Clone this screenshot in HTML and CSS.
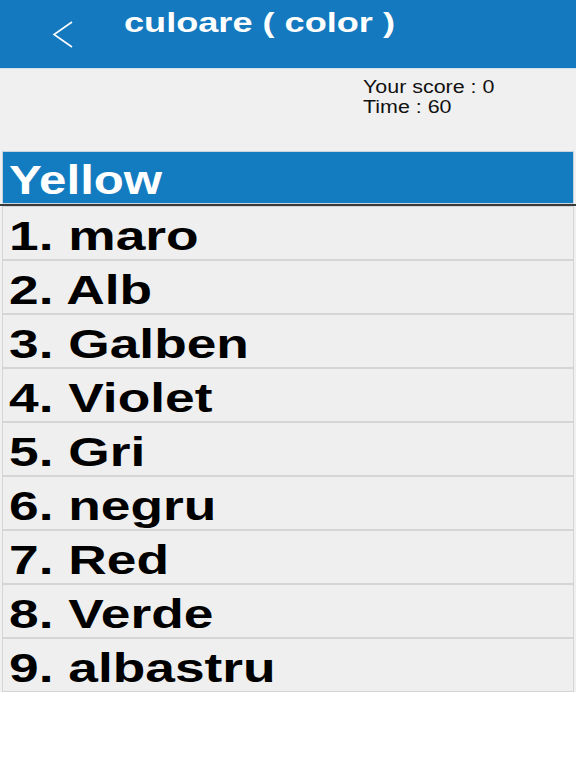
FILE: index.html
```html
<!DOCTYPE html>
<html>
<head>
<meta charset="utf-8">
<link rel="stylesheet" href="styles.css">
</head>
<body>
<div class="header">
  <svg class="back" width="24" height="32" viewBox="0 0 24 32">
    <polyline points="20,2 2,14.5 20,27" fill="none" stroke="#ffffff" stroke-width="1.6"/>
  </svg>
  <span class="title">culoare ( color )</span>
</div>
<div class="info">
  <span class="score">Your score : 0</span>
  <span class="score">Time : 60</span>
</div>
<div class="quiz">
  <div class="question"><span class="qtext">Yellow</span></div>
  <div class="divider"></div>
  <ul class="answers">
    <li class="answer"><span class="atext">1. maro</span></li>
    <li class="answer"><span class="atext">2. Alb</span></li>
    <li class="answer"><span class="atext">3. Galben</span></li>
    <li class="answer"><span class="atext">4. Violet</span></li>
    <li class="answer"><span class="atext">5. Gri</span></li>
    <li class="answer"><span class="atext">6. negru</span></li>
    <li class="answer"><span class="atext">7. Red</span></li>
    <li class="answer"><span class="atext">8. Verde</span></li>
    <li class="answer"><span class="atext">9. albastru</span></li>
  </ul>
</div>
</body>
</html>
```
FILE: styles.css
```css
* { box-sizing: border-box; }
html, body {
  margin: 0;
  padding: 0;
  background: #ffffff;
  font-family: "Liberation Sans", Arial, sans-serif;
}
.header {
  height: 69px;
  background: #1479be;
  border-bottom: 1px solid #cfe2f0;
  display: flex;
  align-items: flex-start;
}
.back {
  margin: 20px 0 0 52px;
  flex: none;
}
.title {
  margin: 7px 0 0 48px;
  color: #ffffff;
  font-weight: bold;
  font-size: 28px;
  line-height: 32px;
  display: inline-block;
  transform: scaleX(1.29);
  transform-origin: left center;
  white-space: nowrap;
}
.info {
  background: #f0f0f0;
  height: 82px;
  padding: 8px 0 0 363px;
  display: flex;
  flex-direction: column;
  align-items: flex-start;
}
.score {
  display: block;
  font-size: 18px;
  line-height: 20px;
  color: #111111;
  transform: scaleX(1.19);
  transform-origin: left center;
  white-space: nowrap;
}
.quiz {
  background: #f0f0f0;
}
.question {
  margin: 0 2px;
  height: 53px;
  background: #137bbf;
  border: 1px solid #c9d4dc;
  padding: 6px 0 0 6px;
}
.qtext {
  display: inline-block;
  color: #ffffff;
  font-weight: bold;
  font-size: 40px;
  line-height: 44px;
  transform: scaleX(1.23);
  transform-origin: left center;
}
.divider {
  height: 2px;
  background: #3a3a3a;
}
.answers {
  list-style: none;
  margin: 0;
  padding: 0 2px;
}
.answer {
  height: 54px;
  border: 1px solid #d5d5d5;
  background: #efefef;
  padding: 7px 0 0 6px;
}
.atext {
  display: inline-block;
  color: #000000;
  font-weight: bold;
  font-size: 41px;
  line-height: 44px;
  transform: scaleX(1.3);
  transform-origin: left center;
  white-space: nowrap;
}
```
